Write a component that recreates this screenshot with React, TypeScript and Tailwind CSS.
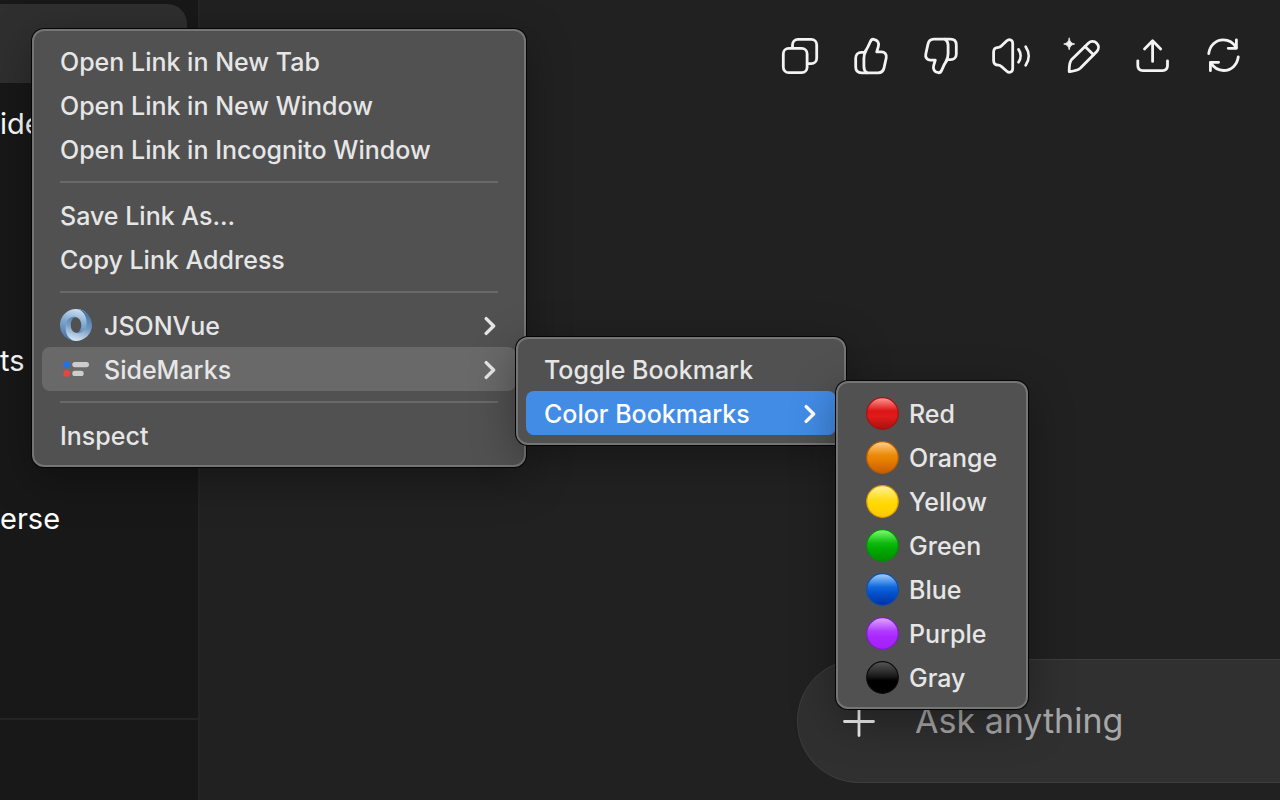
import type { ReactNode } from "react";

const sidebarRows = ["", "ide", "", "", "ts", "", "erse"];

const colors = [
  { name: "Red", rim: "#a81010", stops: ["#ff9a94", "#dc1414", "#e01b1b", "#a80f0f"] },
  { name: "Orange", rim: "#b85c00", stops: ["#ffd08a", "#ec8a0a", "#e67e00", "#c75c00"] },
  { name: "Yellow", rim: "#e09a00", stops: ["#fff5a0", "#ffdc1e", "#ffd800", "#ffc800"] },
  { name: "Green", rim: "#078a07", stops: ["#7cff70", "#0fba0f", "#02ab02", "#008c00"] },
  { name: "Blue", rim: "#0a4fae", stops: ["#a2d2ff", "#1268dc", "#0453cf", "#0030a4"] },
  { name: "Purple", rim: "#7c1cc4", stops: ["#e0aaff", "#b03cff", "#aa28ff", "#a41efa"] },
  { name: "Gray", rim: "#0c0c0c", stops: ["#565656", "#202020", "#000000", "#000000"] },
];

function ToolIcon({ label, children }: { label: string; children: ReactNode }) {
  return (
    <button type="button" aria-label={label} className="size-10 shrink-0">
      <svg
        viewBox="0 0 40 40"
        className="size-10"
        fill="none"
        stroke="#f3f3f3"
        strokeWidth="2.8"
        strokeLinecap="round"
        strokeLinejoin="round"
      >
        {children}
      </svg>
    </button>
  );
}

function ThumbPaths() {
  return (
    <>
      <path d="M13.6 16.3C15.8 13.4 17.6 10.2 19.4 5.6C20.2 3.7 21.2 3.1 22.7 3.3C26.6 3.9 28.4 7 27.3 10.6L25.7 15.8H30.3C33.9 15.8 36 18.6 35.2 22L33.1 31.6C32.4 34.9 30.3 36.8 27.1 36.8H10.6C7 36.8 4.7 34.6 4.7 31V22C4.7 18.6 7 16.3 10.4 16.3Z" />
      <path d="M15 14.6C13.4 17.4 12.9 19.4 12.9 22.4V30.6C12.9 33.8 13.8 35.6 16 36.8" />
    </>
  );
}

function Chevron() {
  return (
    <svg
      viewBox="0 0 12 20"
      className="mt-0.5 mr-[2px] ml-auto h-5 w-3 shrink-0"
      fill="none"
      stroke="currentColor"
      strokeWidth="3.4"
      strokeLinecap="round"
      strokeLinejoin="round"
    >
      <path d="M2.2 2.6L9.6 10L2.2 17.4" />
    </svg>
  );
}

function Menu({ label, className, children }: { label: string; className: string; children: ReactNode }) {
  return (
    <ul
      role="menu"
      aria-label={label}
      className={
        "absolute rounded-xl border-2 border-[#757575] bg-[#515151] p-2 text-[25px] font-medium whitespace-nowrap text-[#e6e6e6] shadow-[0_0_0_1px_#050505,0_12px_44px_rgba(0,0,0,0.35)] " +
        className
      }
    >
      {children}
    </ul>
  );
}

function Item({
  children,
  icon,
  submenu,
  tone = "",
}: {
  children: string;
  icon?: ReactNode;
  submenu?: ReactNode;
  tone?: string;
}) {
  return (
    <li role="none" className="relative">
      <button
        type="button"
        role="menuitem"
        className={"flex h-11 w-full items-center gap-3 rounded-lg px-[18px] text-left " + tone}
      >
        {icon}
        <span className="pt-1">{children}</span>
        {(submenu || children === "JSONVue") && <Chevron />}
      </button>
      {submenu}
    </li>
  );
}

function Separator() {
  return (
    <li role="separator" className="px-[18px] py-[10px]">
      <div className="h-[2px] bg-[#696969]" />
    </li>
  );
}

function JsonIcon() {
  return (
    <svg viewBox="0 0 160 160" className="size-8 shrink-0" aria-hidden="true">
      <defs>
        <linearGradient id="ringOuter" gradientUnits="userSpaceOnUse" x1="95" y1="0" x2="55" y2="150">
          <stop offset="0" stopColor="#cfe1f2" />
          <stop offset="0.45" stopColor="#82a9d0" />
          <stop offset="1" stopColor="#4a78a9" />
        </linearGradient>
        <linearGradient id="ringInner" gradientUnits="userSpaceOnUse" x1="105" y1="10" x2="65" y2="160">
          <stop offset="0" stopColor="#44719f" />
          <stop offset="0.5" stopColor="#7299c2" />
          <stop offset="1" stopColor="#dbe9f6" />
        </linearGradient>
      </defs>
      <path
        fill="url(#ringOuter)"
        d="M80 160C35 160 0 126 0 80C0 36 36 0 80 0C132 0 150 40 150 68C150 106 115 150 80 119C96 119 106 102 106 80C106 60 97 44 80 41C60 34 45 52 45 92C45 153 72 159 80 160Z"
      />
      <path
        fill="url(#ringInner)"
        d="M80 41C56 33 28 52 28 91C28 154 75 160 80 160C121 160 160 126 160 80C160 29 115 0 80 0C90 -1 133 11 133 69C133 107 101 128 80 119C64 116 54 102 54 80C54 58 64 41 80 41Z"
      />
    </svg>
  );
}

function SideMarksIcon() {
  return (
    <svg viewBox="0 0 32 32" className="size-8 shrink-0" aria-hidden="true">
      <circle cx="6.7" cy="11.7" r="3.4" fill="#2a6fdb" />
      <circle cx="6.7" cy="11.7" r="1.5" fill="#0a7cff" />
      <circle cx="6.7" cy="20.4" r="3.4" fill="#e24840" />
      <circle cx="6.7" cy="20.4" r="1.5" fill="#ff3b30" />
      <rect x="12.3" y="9" width="16.7" height="5.2" rx="2.6" fill="#cdcdcd" />
      <rect x="12.3" y="17.8" width="11.4" height="5.2" rx="2.6" fill="#cdcdcd" />
    </svg>
  );
}

function Ball({ name, rim, stops }: { name: string; rim: string; stops: string[] }) {
  const id = "ball" + name;
  return (
    <svg viewBox="0 0 33 33" className="mr-[-2px] ml-[2px] size-[33px] shrink-0" aria-hidden="true">
      <defs>
        <linearGradient id={id} x1="0" y1="0" x2="0" y2="1">
          <stop offset="0" stopColor={stops[0]} />
          <stop offset="0.42" stopColor={stops[1]} />
          <stop offset="0.6" stopColor={stops[2]} />
          <stop offset="1" stopColor={stops[3]} />
        </linearGradient>
      </defs>
      <circle cx="16.5" cy="16.5" r="15.8" fill={"url(#" + id + ")"} stroke={rim} strokeWidth="1.2" />
    </svg>
  );
}

export default function App() {
  return (
    <div className="relative flex h-screen min-h-[800px] overflow-hidden bg-[#212121] font-['Inter',sans-serif] text-white">
      <aside className="flex w-[200px] shrink-0 flex-col border-r-2 border-[#242424] bg-[#181818]">
        <nav aria-label="Chats" className="flex-1 pt-1">
          {sidebarRows.map((text, i) => (
            <a
              key={i}
              href="#chat"
              aria-label={text || "Chat"}
              className={
                "mr-[11px] flex h-[79px] items-center rounded-r-[20px] pt-[3px] text-[29px] " +
                (i === 0 ? "bg-[#2f2f2f]" : "")
              }
            >
              {text}
            </a>
          ))}
        </nav>
        <div className="h-[82px] border-t-2 border-[#242424]" />
      </aside>

      <main className="flex min-w-0 flex-1 flex-col justify-between">
        <div className="flex justify-end pt-9 pr-[37px]">
          <div className="flex w-[463px] justify-between">
            <ToolIcon label="Copy">
              <rect x="3.3" y="12.3" width="23.8" height="24.4" rx="5.4" />
              <path d="M12.5 11.6V8.7A5.4 5.4 0 0 1 17.9 3.3H31.3A5.4 5.4 0 0 1 36.7 8.7V22.3A5.4 5.4 0 0 1 31.3 27.7H27.6" />
            </ToolIcon>
            <ToolIcon label="Good response">
              <ThumbPaths />
            </ToolIcon>
            <ToolIcon label="Bad response">
              <g transform="rotate(180 20 20)">
                <ThumbPaths />
              </g>
            </ToolIcon>
            <ToolIcon label="Read aloud">
              <path d="M6.6 11.3C7.7 11.3 8.5 10.9 9.3 10.1L14.8 4.8C17.4 2.4 20.7 4 20.7 7.4V32.6C20.7 36 17.4 37.6 14.8 35.2L9.3 30.4C8.5 29.6 7.7 29.2 6.6 29.2C3.4 29.2 1.6 27.6 1.6 24.6V16C1.6 13 3.4 11.3 6.6 11.3Z" />
              <path d="M26.5 13.4C29.2 17.2 29.2 22.4 26.5 26.2" />
              <path d="M33.7 10.7C37.6 16.4 37.6 23.6 33.7 29.3" />
            </ToolIcon>
            <ToolIcon label="Edit in canvas">
              <path
                d="M7.2 2.2C7.9 5.8 9.1 7.2 12.7 8C9.1 8.8 7.9 10.2 7.2 13.8C6.5 10.2 5.3 8.8 1.7 8C5.3 7.2 6.5 5.8 7.2 2.2Z"
                fill="#f3f3f3"
                strokeWidth="0.8"
              />
              <path d="M9.7 23.4L26.3 7.2C28.9 4.7 32.5 4.9 34.7 7.2C37 9.6 37.1 13 34.8 15.5L18.5 32C15.1 35 11.1 35.2 7.2 35.6C7.3 31.6 6.9 26.6 9.7 23.4Z" />
              <path d="M23 10.4L31.5 18.7" />
            </ToolIcon>
            <ToolIcon label="Share">
              <path d="M4.8 24.8V29.6C4.8 32.8 6.7 34.7 9.9 34.7H29.4C32.6 34.7 34.5 32.8 34.5 29.6V24.8" />
              <path d="M19.6 4.8V25.4M11.5 13L19.6 4.8L27.7 13" />
            </ToolIcon>
            <ToolIcon label="Try again">
              <path d="M5.7 17.6C6.8 9.6 12.6 3.9 20.3 3.9C25.8 3.9 30.2 6.6 33.2 11.6" />
              <path d="M33.4 3.8V12.3H25.2" />
              <path d="M35.3 20.8C34.2 28.8 28.4 34.5 20.7 34.5C15.2 34.5 10.8 31.8 7.8 26.8" />
              <path d="M7.4 34.7V26.3H15.6" />
            </ToolIcon>
          </div>
        </div>

        <form className="mb-[17px] ml-[597px] flex h-[124px] items-center gap-10 rounded-l-full border border-r-0 border-[#3d3d3d] bg-[#303030] pl-[45px]">
          <button type="button" aria-label="Add" className="size-8 shrink-0">
            <svg viewBox="0 0 32 32" className="size-8" stroke="#f3f3f3" strokeWidth="2.8" strokeLinecap="round">
              <path d="M1.5 16.5H30.5M16 1.5V30.5" />
            </svg>
          </button>
          <input
            aria-label="Ask anything"
            placeholder="Ask anything"
            className="w-full min-w-0 bg-transparent pb-[2px] text-[34px] outline-none placeholder:text-[#a8a8a8]"
          />
        </form>
      </main>

      <Menu label="Link" className="top-[29px] left-8 w-[494px]">
        <Item>Open Link in New Tab</Item>
        <Item>Open Link in New Window</Item>
        <Item>Open Link in Incognito Window</Item>
        <Separator />
        <Item>Save Link As...</Item>
        <Item>Copy Link Address</Item>
        <Separator />
        <Item icon={<JsonIcon />}>JSONVue</Item>
        <Item
          icon={<SideMarksIcon />}
          tone="bg-[#696969]"
          submenu={
            <Menu label="SideMarks" className="-top-[10px] left-full w-[330px]">
              <Item>Toggle Bookmark</Item>
              <Item
                tone="bg-[#428ce6] text-white"
                submenu={
                  <Menu label="Color Bookmarks" className="-top-[10px] left-full w-[192px]">
                    {colors.map((color) => (
                      <Item key={color.name} icon={<Ball {...color} />}>
                        {color.name}
                      </Item>
                    ))}
                  </Menu>
                }
              >
                Color Bookmarks
              </Item>
            </Menu>
          }
        >
          SideMarks
        </Item>
        <Separator />
        <Item>Inspect</Item>
      </Menu>
    </div>
  );
}
